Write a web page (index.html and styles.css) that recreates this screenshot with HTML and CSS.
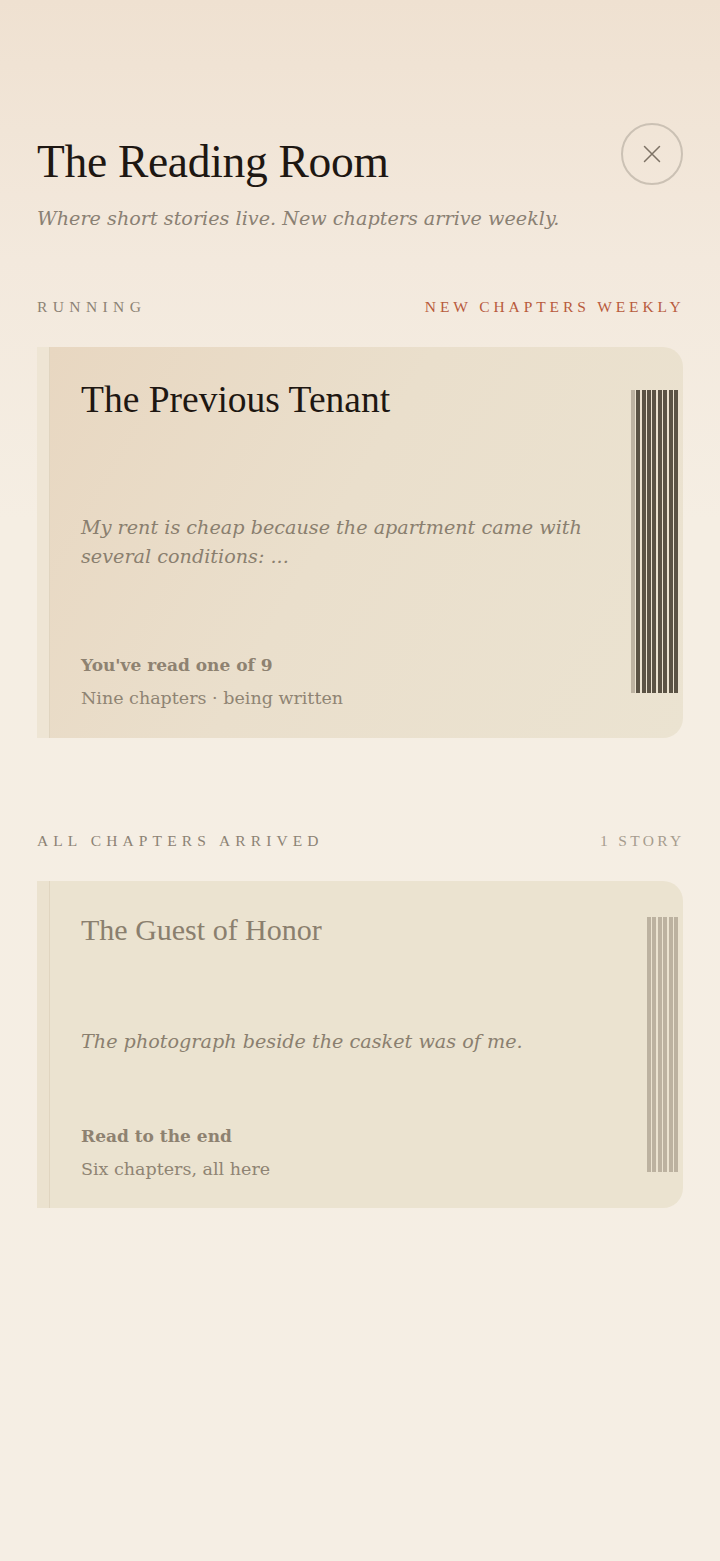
FILE: index.html
```html
<!DOCTYPE html>
<html lang="en">
<head>
<meta charset="utf-8">
<title>The Reading Room</title>
<link rel="stylesheet" href="styles.css">
</head>
<body>
<main class="page">
  <header class="header">
    <div class="header-text">
      <h1 class="page-title">The Reading Room</h1>
      <p class="page-sub">Where short stories live. New chapters arrive weekly.</p>
    </div>
    <button class="close" aria-label="Close">
      <svg width="20" height="20" viewBox="0 0 20 20"><path d="M2.5 2.5 L17.5 17.5 M17.5 2.5 L2.5 17.5" stroke="#7d7265" stroke-width="1.5" fill="none" stroke-linecap="round"/></svg>
    </button>
  </header>

  <section class="section section-running">
    <div class="section-head">
      <span class="label label-wide">Running</span>
      <span class="label label-accent">New chapters weekly</span>
    </div>
    <article class="card card-active">
      <div class="spine"></div>
      <div class="card-body">
        <div class="card-text">
          <h2 class="card-title">The Previous Tenant</h2>
          <p class="excerpt">My rent is cheap because the apartment came with several conditions: ...</p>
          <p class="meta-main">You've read one of 9</p>
          <p class="meta-sub">Nine chapters · being written</p>
        </div>
        <div class="stripes stripes-dark">
          <span class="stripe read"></span><span class="stripe"></span><span class="stripe"></span><span class="stripe"></span><span class="stripe"></span><span class="stripe"></span><span class="stripe"></span><span class="stripe"></span><span class="stripe"></span>
        </div>
      </div>
    </article>
  </section>

  <section class="section section-done">
    <div class="section-head">
      <span class="label label-wide label-wide2">All chapters arrived</span>
      <span class="label label-muted">1 story</span>
    </div>
    <article class="card card-done">
      <div class="spine"></div>
      <div class="card-body">
        <div class="card-text">
          <h2 class="card-title">The Guest of Honor</h2>
          <p class="excerpt">The photograph beside the casket was of me.</p>
          <p class="meta-main">Read to the end</p>
          <p class="meta-sub">Six chapters, all here</p>
        </div>
        <div class="stripes stripes-light">
          <span class="stripe"></span><span class="stripe"></span><span class="stripe"></span><span class="stripe"></span><span class="stripe"></span><span class="stripe"></span>
        </div>
      </div>
    </article>
  </section>
</main>
</body>
</html>
```

FILE: styles.css
```css
* { box-sizing: border-box; }
html, body { margin: 0; padding: 0; }
body {
  min-height: 1561px;
  background: linear-gradient(to bottom, #efe1d1 0px, #f3e9dd 260px, #f5eee3 520px, #f5eee4 100%);
  font-family: "Liberation Serif", "DejaVu Serif", serif;
  color: #1e1712;
}
.page {
  padding: 123px 37px 0 37px;
}
.header {
  display: flex;
  justify-content: space-between;
  align-items: flex-start;
}
.page-title {
  margin: 11px 0 0 0;
  font-weight: 400;
  font-size: 45.5px;
  line-height: 55px;
  color: #1e1712;
  letter-spacing: -0.3px;
}
.page-sub {
  margin: 15px 0 0 0;
  font-family: "DejaVu Serif", "Liberation Serif", serif;
  font-style: italic;
  font-size: 19.2px;
  line-height: 30px;
  color: #8a8073;
}
.close {
  width: 62px;
  height: 62px;
  border-radius: 50%;
  border: 2px solid #cbc1b4;
  background: transparent;
  display: flex;
  align-items: center;
  justify-content: center;
  padding: 0;
  flex: none;
}
.close svg { display: block; }

.section-head {
  display: flex;
  justify-content: space-between;
  align-items: center;
  height: 20px;
}
.section-running { margin-top: 63px; }
.section-done { margin-top: 93px; }
.label {
  font-size: 15.5px;
  line-height: 20px;
  text-transform: uppercase;
  color: #8c8274;
}
.label-wide { letter-spacing: 5.4px; }
.label-wide2 { letter-spacing: 5.1px; }
.label-accent { color: #b85a3c; letter-spacing: 3.9px; margin-right: -1.5px; }
.label-muted { color: #a69c8e; letter-spacing: 3.3px; margin-right: -1.5px; }

.card {
  margin-top: 30px;
  display: flex;
  border-radius: 0 20px 20px 0;
  overflow: hidden;
}
.spine {
  width: 13px;
  flex: none;
  border-right: 1px solid #e0d5c0;
}
.card-active .spine { background: #eee5d4; }
.card-done .spine { background: #ebe2cf; }
.card-body {
  flex: 1;
  display: flex;
  justify-content: space-between;
  align-items: flex-start;
  padding-right: 5px;
  padding-left: 31px;
}
.card-active .card-body {
  background: linear-gradient(120deg, #e8d7c1 0%, #eadfcc 45%, #ebe3d1 100%);
  padding-top: 31px;
  padding-bottom: 25px;
}
.card-done .card-body {
  background: #ebe3d0;
  padding-top: 27px;
  padding-bottom: 24px;
}
.card-text { flex: 1; }
.card-title {
  margin: 0;
  font-weight: 400;
  font-size: 37.5px;
  line-height: 43px;
  color: #1e1712;
}
.card-done .card-title { font-size: 30px; color: #8a7f6e; }
.excerpt {
  margin: 92px 0 0 0;
  font-family: "DejaVu Serif", "Liberation Serif", serif;
  font-style: italic;
  font-size: 19.2px;
  line-height: 29px;
  color: #8a7f6f;
  max-width: 530px;
}
.card-done .excerpt { margin-top: 76px; }
.meta-main {
  margin: 79px 0 0 0;
  font-family: "DejaVu Serif", "Liberation Serif", serif;
  font-size: 17px;
  line-height: 30px;
  font-weight: 700;
  color: #8e8271;
}
.card-done .meta-main { margin-top: 65px; }
.meta-sub {
  margin: 3px 0 0 0;
  font-family: "DejaVu Serif", "Liberation Serif", serif;
  font-size: 17.5px;
  line-height: 30px;
  color: #8f8473;
}

.stripes {
  display: flex;
  gap: 1.4px;
  flex: none;
}
.stripes-dark { margin-top: 12px; height: 303px; }
.stripes-light { margin-top: 9px; height: 255px; }
.stripe {
  display: block;
  width: 4px;
  height: 100%;
}
.stripes-dark .stripe { background: #5b5345; }
.stripes-dark .stripe.read { background: #bdb3a2; }
.stripes-light .stripe { background: #bcb2a0; }
```
